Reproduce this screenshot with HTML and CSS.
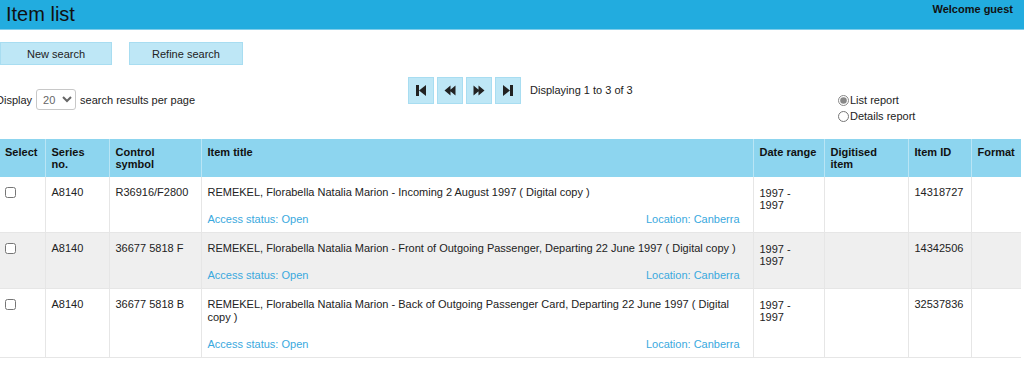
FILE: index.html
```html
<!DOCTYPE html>
<html lang="en">
<head>
<meta charset="utf-8">
<title>Item list</title>
<link rel="stylesheet" href="styles.css">
</head>
<body>
<header class="topbar">
  <h1 class="title">Item list</h1>
  <div class="welcome">Welcome guest</div>
</header>

<div class="actions">
  <button class="btn btn-new" type="button">New search</button>
  <button class="btn btn-refine" type="button">Refine search</button>
</div>

<div class="toolbar">
  <div class="perpage">
    <span>Display</span>
    <select class="sel"><option>20</option><option>50</option><option>100</option></select>
    <span>search results per page</span>
  </div>
  <div class="pager">
    <button class="pbtn" type="button" aria-label="First page">
      <svg width="12" height="13" viewBox="0 0 12 13"><rect x="1" y="1" width="3" height="11" fill="#222"/><path d="M11 1 L4 6.5 L11 12 Z" fill="#222"/></svg>
    </button>
    <button class="pbtn" type="button" aria-label="Previous page">
      <svg width="12" height="13" viewBox="0 0 12 13"><path d="M6.5 1.5 L0.5 6.5 L6.5 11.5 Z M11.5 1.5 L5.5 6.5 L11.5 11.5 Z" fill="#222"/></svg>
    </button>
    <button class="pbtn" type="button" aria-label="Next page">
      <svg width="12" height="13" viewBox="0 0 12 13"><path d="M0.5 1.5 L6.5 6.5 L0.5 11.5 Z M5.5 1.5 L11.5 6.5 L5.5 11.5 Z" fill="#222"/></svg>
    </button>
    <button class="pbtn" type="button" aria-label="Last page">
      <svg width="12" height="13" viewBox="0 0 12 13"><path d="M1 1 L8 6.5 L1 12 Z" fill="#222"/><rect x="8" y="1" width="3" height="11" fill="#222"/></svg>
    </button>
    <span class="displaying">Displaying 1 to 3 of 3</span>
  </div>
  <div class="reports">
    <label class="radio"><input type="radio" name="rep" checked> List report</label>
    <label class="radio"><input type="radio" name="rep"> Details report</label>
  </div>
</div>

<table class="results">
  <colgroup>
    <col class="c-select"><col class="c-series"><col class="c-control"><col class="c-title">
    <col class="c-date"><col class="c-digit"><col class="c-id"><col class="c-format">
  </colgroup>
  <thead>
    <tr>
      <th class="first">Select</th>
      <th>Series no.</th>
      <th>Control symbol</th>
      <th>Item title</th>
      <th>Date range</th>
      <th>Digitised item</th>
      <th>Item ID</th>
      <th>Format</th>
    </tr>
  </thead>
  <tbody>
    <tr>
      <td class="first"><input type="checkbox" class="chk"></td>
      <td>A8140</td>
      <td>R36916/F2800</td>
      <td class="tcell">
        <div class="ttl">REMEKEL, Florabella Natalia Marion - Incoming 2 August 1997 ( Digital copy )</div>
        <div class="meta"><span>Access status: Open</span><span>Location: Canberra</span></div>
      </td>
      <td class="date">1997 -<br>1997</td>
      <td></td>
      <td>14318727</td>
      <td></td>
    </tr>
    <tr class="alt">
      <td class="first"><input type="checkbox" class="chk"></td>
      <td>A8140</td>
      <td>36677 5818 F</td>
      <td class="tcell">
        <div class="ttl">REMEKEL, Florabella Natalia Marion - Front of Outgoing Passenger, Departing 22 June 1997 ( Digital copy )</div>
        <div class="meta"><span>Access status: Open</span><span>Location: Canberra</span></div>
      </td>
      <td class="date">1997 -<br>1997</td>
      <td></td>
      <td>14342506</td>
      <td></td>
    </tr>
    <tr>
      <td class="first"><input type="checkbox" class="chk"></td>
      <td>A8140</td>
      <td>36677 5818 B</td>
      <td class="tcell">
        <div class="ttl">REMEKEL, Florabella Natalia Marion - Back of Outgoing Passenger Card, Departing 22 June 1997 ( Digital copy )</div>
        <div class="meta"><span>Access status: Open</span><span>Location: Canberra</span></div>
      </td>
      <td class="date">1997 -<br>1997</td>
      <td></td>
      <td>32537836</td>
      <td></td>
    </tr>
  </tbody>
</table>
</body>
</html>
```

FILE: styles.css
```css
* { box-sizing: border-box; }
html, body { margin: 0; padding: 0; background: #fff; }
body {
  font-family: "Liberation Sans", Arial, sans-serif;
  font-size: 11px;
  color: #222;
  width: 1024px;
  overflow: hidden;
}

.topbar {
  height: 30px;
  background: #22acdf;
  border-bottom: 1px solid #7fcdea;
  display: flex;
  justify-content: space-between;
  align-items: flex-start;
  padding: 0 11px 0 6px;
}
.title {
  margin: 0;
  font-size: 20px;
  font-weight: normal;
  line-height: 28px;
  color: #111;
}
.welcome {
  font-weight: bold;
  font-size: 11px;
  line-height: 12px;
  padding-top: 3px;
  color: #111;
}

.actions {
  display: flex;
  gap: 17px;
  margin-top: 12px;
}
.btn {
  font-family: inherit;
  font-size: 11px;
  color: #222;
  height: 23px;
  background: #bee7f6;
  border: 1px solid #a8ddf1;
  border-radius: 0;
  padding: 0;
}
.btn-new { width: 112px; }
.btn-refine { width: 114px; }

.toolbar {
  display: grid;
  grid-template-columns: 408px 430px 1fr;
  margin-top: 12px;
  height: 62px;
}
.perpage {
  display: flex;
  align-items: center;
  gap: 4px;
  margin-left: -4px;
  padding-top: 12px;
  align-self: start;
  height: 33px;
}
.sel {
  font-family: inherit;
  font-size: 11px;
  color: #666;
  width: 40px;
  height: 21px;
  border: 1px solid #c8c8c8;
  border-radius: 3px;
  background: #fff;
  padding: 0 2px;
}
.pager {
  display: flex;
  align-items: flex-start;
  gap: 3px;
}
.pbtn {
  width: 26px;
  height: 27px;
  padding: 0;
  background: #bee7f6;
  border: 1px solid #a8ddf1;
  display: flex;
  align-items: center;
  justify-content: center;
}
.displaying {
  margin-left: 6px;
  line-height: 13px;
  padding-top: 7px;
}
.reports {
  display: flex;
  flex-direction: column;
  padding-top: 15px;
}
.radio {
  display: flex;
  align-items: center;
  gap: 1px;
  line-height: 15px;
  height: 16px;
}
.radio input {
  margin: 0;
  width: 11px;
  height: 11px;
  accent-color: #888;
}

.results {
  margin-top: 0;
  border-collapse: collapse;
  table-layout: fixed;
  width: 1021px;
}
.c-select { width: 45px; }
.c-series { width: 64px; }
.c-control { width: 92px; }
.c-title { width: 552px; }
.c-date { width: 71px; }
.c-digit { width: 84px; }
.c-id { width: 63px; }
.c-format { width: 50px; }

.results th {
  background: #8dd5ef;
  text-align: left;
  vertical-align: top;
  font-weight: bold;
  font-size: 11px;
  line-height: 12px;
  padding: 7px 6px 0 6px;
  height: 38px;
  border-left: 1px solid #b9e5f5;
  color: #111;
}
.results td {
  vertical-align: top;
  padding: 9px 6px 6px 6px;
  line-height: 13px;
  border-left: 1px solid #e6e6e6;
  border-bottom: 1px solid #e6e6e6;
}
.results th.first, .results td.first {
  border-left: none;
  padding-left: 5px;
}
.results tr.alt td { background: #efefef; }
.results td.date { line-height: 12px; padding-top: 10px; }
.results td.tcell { padding-right: 13px; padding-left: 6px; }
.chk {
  margin: 1px 0 0 0;
  width: 11px;
  height: 11px;
}
.ttl { line-height: 13px; }
.meta {
  display: flex;
  justify-content: space-between;
  margin-top: 14px;
  color: #3aa9de;
  line-height: 13px;
}
```
